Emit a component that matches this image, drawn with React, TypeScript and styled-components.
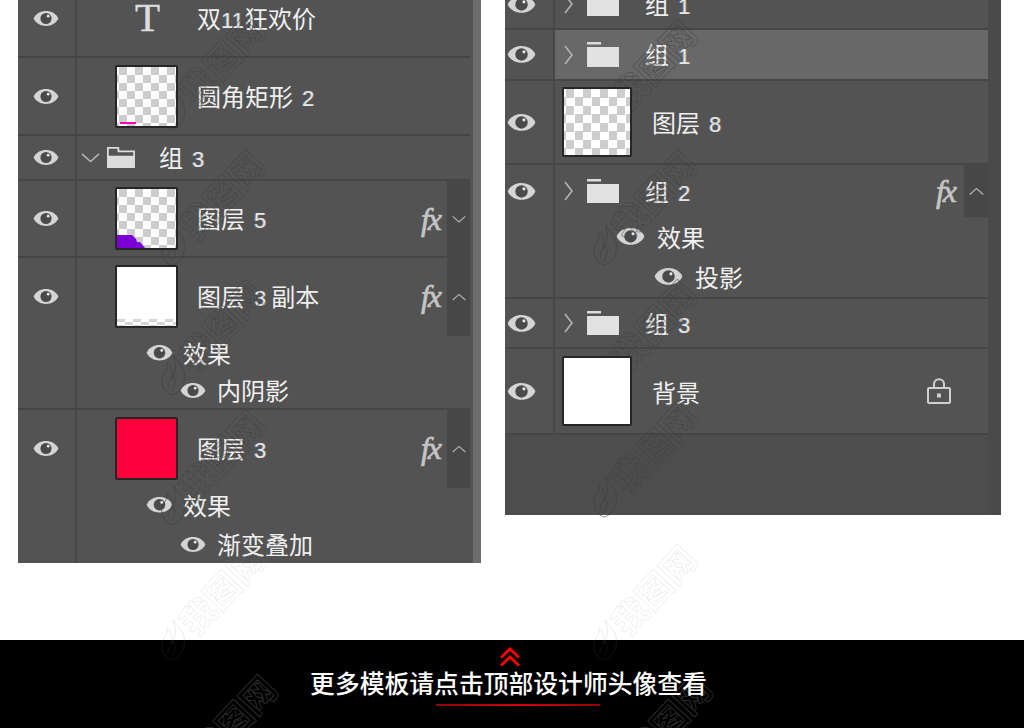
import React from "react";
import styled, { createGlobalStyle } from "styled-components";

const GlobalStyle = createGlobalStyle`
    html, body {
        margin: 0;
        padding: 0;
        background: #fff;
    }
`;

const CJK = `"Noto Sans CJK SC", "Noto Sans", sans-serif`;

const Page = styled.div`
    position: relative;
    width: 1024px;
    height: 728px;
    overflow: hidden;
    background: #fff;
    font-family: ${CJK};
`;

const Panels = styled.div`
    display: flex;
    align-items: flex-start;
    gap: 24px;
    height: 640px;
    padding-left: 18px;
`;

const Panel = styled.div<{ $w: number; $h: number; $top: number; $bg: string; $strip: string; $stripW: number; $gutter: number }>`
    box-sizing: border-box;
    width: ${(p) => p.$w}px;
    height: ${(p) => p.$h}px;
    margin-top: ${(p) => p.$top}px;
    padding-right: ${(p) => p.$gutter}px;
    overflow: hidden;
    background: ${(p) => p.$bg};
    border-right: ${(p) => p.$stripW}px solid ${(p) => p.$strip};
`;

const Row = styled.div`
    display: flex;
    background: #535353;
    border-bottom: 2px solid #464646;
`;

const EyeCell = styled.div<{ $w: number; $top: number; $left: number }>`
    box-sizing: border-box;
    flex: none;
    width: ${(p) => p.$w}px;
    padding: ${(p) => p.$top}px 0 0 ${(p) => p.$left}px;
    border-right: 2px solid #464646;
`;

const Body = styled.div<{ $selected?: boolean }>`
    flex: 1;
    min-width: 0;
    background: ${(p) => (p.$selected ? "#686868" : "transparent")};
`;

const Main = styled.div<{ $h: number; $pad: number }>`
    display: flex;
    align-items: center;
    height: ${(p) => p.$h}px;
    padding-left: ${(p) => p.$pad}px;
`;

const Label = styled.span<{ $ml?: number }>`
    display: inline-block;
    margin-left: ${(p) => p.$ml ?? 0}px;
    padding-top: 2px;
    color: #f0f0f0;
    font-size: 24px;
    line-height: 30px;
    white-space: nowrap;
`;

const EffectLine = styled.div<{ $h: number; $pad: number; $gap: number }>`
    display: flex;
    align-items: center;
    gap: ${(p) => p.$gap}px;
    height: ${(p) => p.$h}px;
    padding-left: ${(p) => p.$pad}px;

    ${Label} {
        padding-top: 0;
    }
`;

const Num = styled.span<{ $tight?: boolean }>`
    margin: ${(p) => (p.$tight ? "0" : "0 5px 0 9px")};
    color: #e6e6e6;
    font-family: "Liberation Sans", sans-serif;
    font-size: 22px;
    text-shadow: -1px 0 0 rgba(90, 160, 230, 0.45), 1px 0 0 rgba(230, 160, 90, 0.35);
`;

const TypeGlyph = styled.span`
    margin-top: -2px;
    color: #dcdcdc;
    font-family: "Liberation Serif", serif;
    font-size: 41px;
    line-height: 41px;
    -webkit-text-stroke: 0.5px #dcdcdc;
`;

const Thumb = styled.div<{ $size: number; $kind: "checker" | "white" | "red"; $cell: number }>`
    position: relative;
    z-index: 2;
    box-sizing: border-box;
    flex: none;
    width: ${(p) => p.$size}px;
    height: ${(p) => p.$size}px;
    overflow: hidden;
    border: 2px solid #262626;
    border-radius: 2px;
    background-color: ${(p) => (p.$kind === "red" ? "#ff003c" : "#fff")};
    background-image: ${(p) =>
        p.$kind === "checker" ? "repeating-conic-gradient(#fff 0 25%, #cdcdcd 0 50%)" : "none"};
    background-size: ${(p) => p.$cell * 2}px ${(p) => p.$cell * 2}px;
    background-position: 2px 0;
`;

const PinkBar = styled.div`
    position: absolute;
    left: 3px;
    bottom: 2px;
    width: 16px;
    height: 2px;
    background: #ff00b4;
`;

const CheckerStrip = styled.div`
    position: absolute;
    left: 0;
    right: 0;
    bottom: 0;
    height: 7px;
    background-image: repeating-conic-gradient(#fff 0 25%, #d6d6d6 0 50%);
    background-size: 16px 6px;
`;

const Fx = styled.span<{ $mr: number }>`
    margin-left: auto;
    margin-right: ${(p) => p.$mr}px;
    color: #c4c4c4;
    font-family: "Liberation Serif", serif;
    font-size: 32px;
    font-style: italic;
    line-height: 30px;
    letter-spacing: -2px;
    -webkit-text-stroke: 0.7px #c4c4c4;
`;

const FxBar = styled.div<{ $w: number; $bleed?: boolean }>`
    display: flex;
    align-items: center;
    justify-content: center;
    align-self: stretch;
    flex: none;
    width: ${(p) => p.$w}px;
    margin-bottom: ${(p) => (p.$bleed ? -2 : 0)}px;
    background: #474747;
`;

const LockSlot = styled.div`
    display: flex;
    margin-left: auto;
    margin-right: 37px;
`;

const Footer = styled.div`
    display: flex;
    flex-direction: column;
    align-items: center;
    height: 88px;
    padding-top: 7px;
    box-sizing: border-box;
    background: #000;
`;

const FooterChevrons = styled.svg`
    display: block;
    flex: none;
    margin-right: 4px;
`;

const FooterText = styled.div`
    margin: -3px 7px 0 0;
    color: #fff;
    font-size: 24.8px;
    font-weight: 500;
    line-height: 36px;
    white-space: nowrap;
`;

const FooterRule = styled.div`
    width: 164px;
    height: 2px;
    margin: 4px 0 0 12px;
    background: linear-gradient(90deg, #8e0606, #d40000 50%, #8e0606);
`;

const Watermark = styled.div<{ $x: number; $y: number; $c: string }>`
    position: absolute;
    z-index: 1;
    left: ${(p) => p.$x}px;
    top: ${(p) => p.$y}px;
    display: flex;
    align-items: center;
    gap: 2px;
    color: ${(p) => p.$c};
    transform: rotate(-47deg);
    transform-origin: left center;
    pointer-events: none;
`;

const WatermarkText = styled.span<{ $c: string }>`
    color: transparent;
    font-size: 35px;
    font-weight: 700;
    line-height: 38px;
    white-space: nowrap;
    -webkit-text-stroke: 0.8px ${(p) => p.$c};
`;

const EyeIcon = ({ w }: { w: number }) => (
    <svg width={w} height={w * 0.65} viewBox="0 0 26 17" style={{ display: "block", flex: "none" }}>
        <path d="M0.5 8.5C5 -1.5 21 -1.5 25.5 8.5C21 18.5 5 18.5 0.5 8.5Z" fill="#d4d4d4" />
        <circle cx="13" cy="8.5" r="5.6" fill="#4a4a4a" />
        <circle cx="15.2" cy="6.2" r="1.4" fill="#e8e8e8" />
    </svg>
);

const Chevron = ({ dir, size }: { dir: "right" | "down" | "up"; size: number }) => {
    const d =
        dir === "right" ? "M2 1L9 10L2 19" : dir === "down" ? "M1 2L10 10L19 2" : "M1 10L10 2L19 10";
    const box = dir === "right" ? "0 0 11 20" : "0 0 20 12";
    const ratio = dir === "right" ? 20 / 11 : 12 / 20;
    return (
        <svg width={size} height={size * ratio} viewBox={box} style={{ display: "block", flex: "none" }}>
            <path d={d} fill="none" stroke="#b4b4b4" strokeWidth="1.6" />
        </svg>
    );
};

const FolderIcon = ({ w, ml, open }: { w: number; ml: number; open?: boolean }) => (
    <svg width={w} height={w * 0.78} viewBox="0 0 32 25" style={{ display: "block", flex: "none", marginLeft: ml }}>
        {open ? (
            <>
                <path d="M1 1H13V5H31V11H1Z" fill="none" stroke="#dcdcdc" strokeWidth="2" />
                <rect x="0" y="11" width="32" height="14" fill="#dcdcdc" />
            </>
        ) : (
            <>
                <rect x="0" y="0" width="14" height="2.5" fill="#dcdcdc" />
                <rect x="0" y="5" width="32" height="20" fill="#e2e2e2" />
            </>
        )}
    </svg>
);

const LockIcon = () => (
    <svg width="24" height="26" viewBox="0 0 24 26" style={{ display: "block" }}>
        <path d="M7 10V6.5C7 -0.5 17 -0.5 17 6.5V10" fill="none" stroke="#d0d0d0" strokeWidth="2" />
        <rect x="1" y="10" width="22" height="15" rx="1" fill="none" stroke="#d0d0d0" strokeWidth="2" />
        <rect x="10" y="15.5" width="4" height="4" fill="#d0d0d0" />
    </svg>
);

const Flame = () => (
    <svg width="30" height="42" viewBox="0 0 30 42" style={{ flex: "none", transform: "rotate(47deg)" }}>
        <path
            d="M15 1C21 9 28 15 26 26C25 34 19 40 14 41C7 39 2 32 4 23C6 17 10 15 9 9C13 12 15 17 13 24C18 20 18 10 15 1Z"
            fill="none"
            stroke="currentColor"
            strokeWidth="1"
        />
        <path d="M10 34C9 28 13 26 15 22C18 27 17 33 13 37" fill="none" stroke="currentColor" strokeWidth="1" />
    </svg>
);

const LeftEye = ({ h }: { h: number }) => (
    <EyeCell $w={59} $top={Math.round((h - 17) / 2)} $left={15}>
        <EyeIcon w={26} />
    </EyeCell>
);

const RightEye = ({ h }: { h: number }) => (
    <EyeCell $w={50} $top={Math.round((h - 19) / 2)} $left={2}>
        <EyeIcon w={29} />
    </EyeCell>
);

const LeftFx = ({ dir }: { dir: "up" | "down" }) => (
    <>
        <Fx $mr={7}>fx</Fx>
        <FxBar $w={23} $bleed>
            <Chevron dir={dir} size={14} />
        </FxBar>
    </>
);

const LeftEffect = ({ h, text, sub }: { h: number; text: string; sub?: boolean }) => (
    <EffectLine $h={h} $pad={sub ? 103 : 69} $gap={sub ? 11 : 10}>
        <EyeIcon w={sub ? 26 : 27} />
        <Label>{text}</Label>
    </EffectLine>
);

const RightGroup = ({ h, n, selected }: { h: number; n: number; selected?: boolean }) => (
    <Row>
        <RightEye h={h} />
        <Body $selected={selected}>
            <Main $h={h} $pad={8}>
                <Chevron dir="right" size={11} />
                <FolderIcon w={32} ml={13} />
                <Label $ml={26}>
                    组<Num>{n}</Num>
                </Label>
            </Main>
        </Body>
    </Row>
);

const onPanel = "rgba(62,62,62,0.55)";
const onWhite = "rgba(120,120,120,0.14)";
const onBlack = "rgba(255,255,255,0.2)";

const marks = [
    { x: 163, y: 100, c: onPanel },
    { x: 163, y: 235, c: onPanel },
    { x: 163, y: 365, c: onPanel },
    { x: 163, y: 495, c: onPanel },
    { x: 163, y: 630, c: onWhite },
    { x: 175, y: 760, c: onBlack },
    { x: 595, y: 105, c: onPanel },
    { x: 595, y: 235, c: onPanel },
    { x: 595, y: 365, c: onPanel },
    { x: 595, y: 487, c: onPanel },
    { x: 595, y: 630, c: onWhite },
    { x: 610, y: 760, c: onBlack },
];

const App = (): JSX.Element => {
    return (
        <Page>
            <GlobalStyle />
            <Panels>
                <Panel $w={463} $h={582} $top={-19} $bg="#535353" $strip="#6c6c6c" $stripW={8} $gutter={3}>
                    <Row>
                        <LeftEye h={75} />
                        <Body>
                            <Main $h={75} $pad={58}>
                                <TypeGlyph>T</TypeGlyph>
                                <Label $ml={37}>
                                    双<Num $tight>11</Num>狂欢价
                                </Label>
                            </Main>
                        </Body>
                    </Row>
                    <Row>
                        <LeftEye h={76} />
                        <Body>
                            <Main $h={76} $pad={38}>
                                <Thumb $size={63} $kind="checker" $cell={8}>
                                    <PinkBar />
                                </Thumb>
                                <Label $ml={19}>
                                    圆角矩形<Num>2</Num>
                                </Label>
                            </Main>
                        </Body>
                    </Row>
                    <Row>
                        <LeftEye h={43} />
                        <Body>
                            <Main $h={43} $pad={4}>
                                <Chevron dir="down" size={19} />
                                <FolderIcon w={28} ml={7} open />
                                <Label $ml={24}>
                                    组<Num>3</Num>
                                </Label>
                            </Main>
                        </Body>
                    </Row>
                    <Row>
                        <LeftEye h={75} />
                        <Body>
                            <Main $h={75} $pad={38}>
                                <Thumb $size={63} $kind="checker" $cell={8}>
                                    <svg
                                        width="30"
                                        height="15"
                                        viewBox="0 0 30 15"
                                        style={{ position: "absolute", left: 0, bottom: 0 }}
                                    >
                                        <path d="M0 2H15L19 6L20 9H23L28 15H0Z" fill="#7a00d6" />
                                    </svg>
                                </Thumb>
                                <Label $ml={19}>
                                    图层<Num>5</Num>
                                </Label>
                                <LeftFx dir="down" />
                            </Main>
                        </Body>
                    </Row>
                    <Row>
                        <LeftEye h={76} />
                        <Body>
                            <Main $h={76} $pad={38}>
                                <Thumb $size={63} $kind="white" $cell={8}>
                                    <CheckerStrip />
                                </Thumb>
                                <Label $ml={19}>
                                    图层<Num>3</Num>副本
                                </Label>
                                <LeftFx dir="up" />
                            </Main>
                            <LeftEffect h={38} text="效果" />
                            <LeftEffect h={36} text="内阴影" sub />
                        </Body>
                    </Row>
                    <Row>
                        <LeftEye h={76} />
                        <Body>
                            <Main $h={76} $pad={38}>
                                <Thumb $size={63} $kind="red" $cell={8} />
                                <Label $ml={19}>
                                    图层<Num>3</Num>
                                </Label>
                                <LeftFx dir="up" />
                            </Main>
                            <LeftEffect h={38} text="效果" />
                            <LeftEffect h={40} text="渐变叠加" sub />
                        </Body>
                    </Row>
                </Panel>
                <Panel $w={496} $h={535} $top={-20} $bg="#4d4d4d" $strip="#4a4a4a" $stripW={13} $gutter={0}>
                    <RightGroup h={48} n={1} />
                    <RightGroup h={49} n={1} selected />
                    <Row>
                        <RightEye h={82} />
                        <Body>
                            <Main $h={82} $pad={7}>
                                <Thumb $size={70} $kind="checker" $cell={8.5} />
                                <Label $ml={20}>
                                    图层<Num>8</Num>
                                </Label>
                            </Main>
                        </Body>
                    </Row>
                    <Row>
                        <RightEye h={52} />
                        <Body>
                            <Main $h={52} $pad={8}>
                                <Chevron dir="right" size={11} />
                                <FolderIcon w={32} ml={13} />
                                <Label $ml={26}>
                                    组<Num>2</Num>
                                </Label>
                                <Fx $mr={9}>fx</Fx>
                                <FxBar $w={24}>
                                    <Chevron dir="up" size={15} />
                                </FxBar>
                            </Main>
                            <EffectLine $h={39} $pad={61} $gap={12}>
                                <EyeIcon w={29} />
                                <Label>效果</Label>
                            </EffectLine>
                            <EffectLine $h={41} $pad={99} $gap={12}>
                                <EyeIcon w={29} />
                                <Label>投影</Label>
                            </EffectLine>
                        </Body>
                    </Row>
                    <RightGroup h={48} n={3} />
                    <Row>
                        <RightEye h={84} />
                        <Body>
                            <Main $h={84} $pad={7}>
                                <Thumb $size={70} $kind="white" $cell={8} />
                                <Label $ml={20}>背景</Label>
                                <LockSlot>
                                    <LockIcon />
                                </LockSlot>
                            </Main>
                        </Body>
                    </Row>
                </Panel>
            </Panels>
            <Footer>
                <FooterChevrons width="20" height="20" viewBox="0 0 20 20">
                    <path d="M1 10.5L10 2L19 10.5M1 18.5L10 10L19 18.5" fill="none" stroke="#ff0000" strokeWidth="3" />
                </FooterChevrons>
                <FooterText>更多模板请点击顶部设计师头像查看</FooterText>
                <FooterRule />
            </Footer>
            {marks.map((m) => (
                <Watermark key={`${m.x}-${m.y}`} $x={m.x} $y={m.y} $c={m.c}>
                    <Flame />
                    <WatermarkText $c={m.c}>我图网</WatermarkText>
                </Watermark>
            ))}
        </Page>
    );
};

export default App;
